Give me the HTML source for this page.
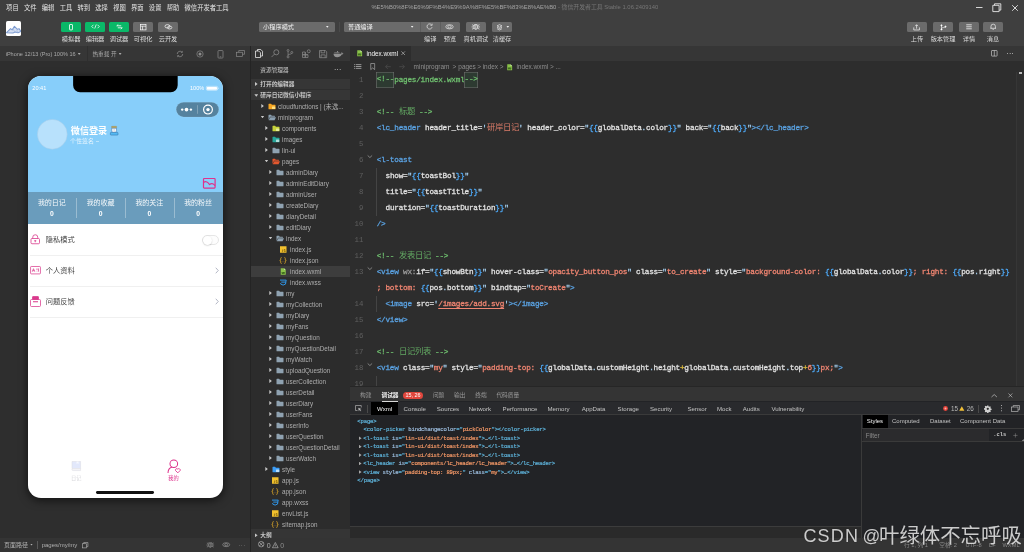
<!DOCTYPE html>
<html lang="zh-CN">
<head>
<meta charset="utf-8">
<title>微信开发者工具</title>
<style>
*{box-sizing:border-box;margin:0;padding:0}
html,body{width:1024px;height:552px;overflow:hidden;background:#2e2e2e}
body{position:relative;font-family:"Liberation Sans","Noto Sans CJK SC",sans-serif;color:#ccc;font-size:6.5px;line-height:1;-webkit-font-smoothing:antialiased}
#app{position:absolute;left:0;top:0;width:1024px;height:552px;overflow:hidden;will-change:transform}
.abs{position:absolute}
svg{display:block;overflow:visible}
/* ---------- top ---------- */
#top{position:absolute;left:0;top:0;width:1024px;height:46px;background:#3f3f3f}
#menu{position:absolute;left:6.100px;top:3.200px;height:9px;white-space:nowrap;font-size:6.300px;line-height:9px;color:#e6e6e6}
#menu span{display:inline-block;margin-right:5.250px}
#title{position:absolute;left:371.400px;top:3.300px;font-size:5.870px;line-height:9px;color:#a4a4a4;white-space:nowrap}
#title span{color:#767676}
.tbtn{position:absolute;top:21.600px;height:10.800px;width:20px;border-radius:1.5px;background:#0ab868}
.tbtn.g{background:#6b6b6b}
.tlab{position:absolute;top:34.600px;width:40px;margin-left:-10px;text-align:center;font-size:6.2px;line-height:8px;color:#dcdcdc;white-space:nowrap}
.sel{position:absolute;top:21.5px;height:10.5px;background:#6b6b6b;border-radius:1.5px;color:#f0f0f0;font-size:6.2px;line-height:10.5px;padding-left:4px;white-space:nowrap}
.dd{position:absolute;top:4.300px;width:3px;height:2px;background:#f0f0f0;clip-path:polygon(0 0,100% 0,50% 100%)}
.tri{display:inline-block;width:3px;height:2px;margin-left:2px;vertical-align:1px;background:currentColor;clip-path:polygon(0 0,100% 0,50% 100%)}
/* ---------- simulator ---------- */
#sim{position:absolute;left:0;top:46px;width:250px;height:506px;background:#2e2e2e;overflow:hidden}
#simbar{position:absolute;left:0;top:0;width:250px;height:15px;background:#363636}
#phone{position:absolute;left:27.500px;top:29.700px;width:195px;height:422px;background:#fff;border-radius:13px;overflow:hidden;box-shadow:0 2px 9px 1px rgba(0,0,0,0.55)}
#phead{position:absolute;left:0;top:0;width:100%;height:116.300px;background:#87cefa}
#pstats{position:absolute;left:0;top:116.300px;width:100%;height:32.500px;background:#6a9cbc}
#pstats .st{position:absolute;top:6.400px;width:48.750px;text-align:center;font-size:7px;line-height:9px;color:#f4f8fb;white-space:nowrap}
#pstats .st b{display:block;font-size:6.800px;line-height:8px;margin-top:2.800px;color:#fff}
#pstats i{position:absolute;top:6.500px;width:0.500px;height:20px;background:rgba(255,255,255,0.32)}
.prow{position:absolute;left:0;width:100%;height:31px}
.prow::after{content:"";position:absolute;left:2.500px;right:0;top:30.700px;height:0.600px;background:#f0f0f0}
.prow span{position:absolute;left:18.200px;top:11.100px;font-size:7.250px;line-height:10px;color:#444;white-space:nowrap}
.prow .chev{left:187.600px;top:12px}
#simfoot{position:absolute;left:0;top:492px;width:250px;height:14px;background:#343434}
#vline{position:absolute;left:250px;top:46px;width:1px;height:506px;background:#242424}
/* ---------- sidebar ---------- */
#side{position:absolute;left:251px;top:46px;width:99px;height:492px;background:#2c2c2c;overflow:hidden}
#actbar{position:absolute;left:0;top:0;width:99px;height:15px;background:#363636}
.sh{position:absolute;left:0;width:99px;height:11px;background:#363636}
.sh span{position:absolute;left:9.300px;top:2px;font-size:5.700px;line-height:7px;font-weight:bold;color:#c6c6c6;white-space:nowrap}
.ar{position:absolute;top:3.600px;width:2.600px;height:3.800px;background:#c8c8c8;clip-path:polygon(0 0,100% 50%,0 100%)}
.ad{position:absolute;top:4.200px;width:3.800px;height:2.600px;background:#c8c8c8;clip-path:polygon(0 0,100% 0,50% 100%)}
#tree{position:absolute;left:0;top:54.500px;width:99px}
.tr{position:relative;height:11px;width:99px}
.tr.sel2{background:#3d3d3d}
.tr span{position:absolute;top:2px;font-size:6.300px;line-height:7px;color:#aeaeae;white-space:nowrap}
.tr .ic{position:absolute;top:2px;width:8px;height:7px}
/* ---------- editor ---------- */
#ed{position:absolute;left:350px;top:46px;width:674px;height:340px;background:#2d2d2d;overflow:hidden}
#tabs{position:absolute;left:0;top:0;width:674px;height:15.300px;background:#363636}
#crumb{position:absolute;left:0;top:15.300px;width:674px;height:10.700px}
.cr{position:absolute;top:2px;font-size:6.450px;line-height:8px;color:#8e8e8e;white-space:nowrap}
.cl{position:absolute;left:0;width:674px;height:16px}
.cl pre{position:absolute;left:26.700px;top:0;font-family:"Liberation Mono",monospace;font-size:7.700px;letter-spacing:-0.221px;line-height:16px;color:#dcdcdc;white-space:pre}
.cl .ln{position:absolute;left:0;top:0;width:13.400px;text-align:right;font-style:normal;font-family:"Liberation Mono",monospace;font-size:7.330px;line-height:16px;color:#5f5f5f}
.cl .fd{position:absolute;left:17.100px;top:3.100px;width:5.800px;height:3.200px}
.c{color:#6fbf6f}.t{color:#5aa2e2}.a{color:#e2e2e2}.s{color:#f28672}.q{color:#a6d0f0}.b{color:#4da6f2}.d{color:#9c9c9c}.y{color:#e6c23c}
.u{text-decoration:underline;text-decoration-thickness:0.600px;text-underline-offset:2px}
.bx{display:inline-block;height:15.600px;line-height:15.600px;vertical-align:top;margin-top:0.200px;margin-left:-0.600px;padding-left:0.600px;box-shadow:inset 0 0 0 0.600px #707070;background:#2d3a31}
.k{font-size:8.300px;letter-spacing:0;-webkit-text-stroke:0}
.s .k{color:#dc7c69}.c .k{color:#62a862}
.cl pre{-webkit-text-stroke:0.280px currentColor}
/* ---------- debug ---------- */
#dbg{position:absolute;left:350px;top:386px;width:674px;height:152px;background:#222326;overflow:hidden}
#phd{position:absolute;left:0;top:0.300px;width:674px;height:15.200px;background:#343434;border-top:0.600px solid #262626}
.pt{position:absolute;top:4.300px;font-size:5.700px;line-height:7px;color:#9a9a9a;white-space:nowrap}
.pt.on{color:#f0f0f0;font-weight:bold}
#dtabs{position:absolute;left:0;top:15.500px;width:674px;height:13.700px;background:#292a2d;border-bottom:0.500px solid #3a3a3a}
.dt{position:absolute;top:3.600px;font-size:6.100px;line-height:7px;color:#c2c2c2;white-space:nowrap}
.dt.on{color:#f4f4f4}
.wl{position:absolute;left:0;width:511px;height:8.450px}
.wl pre{position:absolute;top:0;font-family:"Liberation Mono",monospace;font-size:5.600px;letter-spacing:-0.162px;line-height:8.450px;white-space:pre;color:#c8c8c8;-webkit-text-stroke:0.200px currentColor}
.wr{top:1.700px;width:2.600px;height:3.600px;background:#a8a8a8}
.wt{color:#5db0d7}.wa{color:#9bbbdc}.wv{color:#f29766}.wd{color:#d0d0d0}
#sty{position:absolute;left:511.400px;top:29.200px;width:162.600px;height:122.800px;background:#222326;border-left:0.600px solid #3a3a3a}
.sb{position:absolute;top:4px;font-size:5.700px;line-height:7px;color:#8a8a8a;white-space:nowrap}
#wm{position:absolute;left:803.400px;top:522px;height:26px;line-height:26px;white-space:nowrap;color:rgba(255,255,255,0.78);font-family:"Liberation Sans","Noto Sans CJK SC",sans-serif;text-shadow:0 0 1px rgba(0,0,0,0.5)}
#wm span{vertical-align:baseline}
#status{position:absolute;left:251px;top:538px;width:773px;height:14px;background:#343434}
</style>
</head>
<body>
<div id="app">
<!-- ================= TOP ================= -->
<div id="top">
  <div id="menu"><span>项目</span><span>文件</span><span>编辑</span><span>工具</span><span>转到</span><span>选择</span><span>视图</span><span>界面</span><span>设置</span><span>帮助</span><span>微信开发者工具</span></div>
  <div id="title">%E5%B0%8F%E6%9F%B4%E9%9A%8F%E5%BF%83%E8%AE%B0<span> - 微信开发者工具 Stable 1.06.2409140</span></div>
  <!-- window controls -->
  <svg class="abs" style="left:970px;top:0" width="54" height="15" viewBox="0 0 54 15" fill="none" stroke="#e8e8e8" stroke-width="0.9">
    <path d="M6 7.5h6.5"/>
    <path d="M22.8 5.3h6.3v6.3h-6.3z"/><path d="M24.5 5.3v-1.5h6.3v6.3h-1.7"/>
    <path d="M42.2 5.2l5.6 5.6M47.8 5.2l-5.6 5.6"/>
  </svg>
  <!-- logo -->
  <div class="abs" style="left:6px;top:21px;width:15.300px;height:15.300px;background:#fff;border-radius:1.600px;overflow:hidden">
    <svg width="15.300" height="15.300" viewBox="0 0 30 30" fill="none" stroke="#7d9bd0" stroke-width="2" stroke-linejoin="round"><path d="M1 23l8-8 3 2.500 4.500-7 6 6 3-1.500 4 5.500-6 2.500-5-1.500-5 2z" fill="#d5dff2"/><path d="M13 14l5 9M21 17l2 6" stroke-width="1.300" stroke="#9db4dc"/></svg>
  </div>
  <!-- green / gray buttons -->
  <div class="tbtn" style="left:61.1px"><svg class="abs" style="left:7px;top:2.2px" width="6" height="6.4" viewBox="0 0 12 13" fill="none" stroke="#fff" stroke-width="1.7"><rect x="3" y="1" width="6" height="11" rx="1"/></svg></div>
  <div class="tbtn" style="left:85px"><svg class="abs" style="left:5.5px;top:2.8px" width="9" height="5" viewBox="0 0 18 10" fill="none" stroke="#fff" stroke-width="1.5"><path d="M5 1.5L1.5 5 5 8.5M13 1.5L16.500 5 13 8.500M10.500 1L7.500 9"/></svg></div>
  <div class="tbtn" style="left:109px"><svg class="abs" style="left:6.5px;top:2.6px" width="7" height="5.6" viewBox="0 0 14 11" fill="none" stroke="#fff" stroke-width="1.6"><path d="M4.500 1L1.500 3.500h9M9.500 10l3-2.500h-9"/></svg></div>
  <div class="tbtn g" style="left:133.1px"><svg class="abs" style="left:6.7px;top:2.2px" width="6.6" height="6.4" viewBox="0 0 13 13" fill="none" stroke="#fff" stroke-width="1.4"><rect x="1" y="1" width="11" height="11"/><path d="M1 4.500h11M5 4.500V12"/></svg></div>
  <div class="tbtn g" style="left:158px"><svg class="abs" style="left:5.6px;top:2.6px" width="8.8" height="5.6" viewBox="0 0 18 11" fill="none" stroke="#fff" stroke-width="1.4"><ellipse cx="7" cy="4.500" rx="5" ry="3.500"/><ellipse cx="11.500" cy="7" rx="4.500" ry="3"/></svg></div>
  <div class="tlab" style="left:61.1px">模拟器</div>
  <div class="tlab" style="left:85px">编辑器</div>
  <div class="tlab" style="left:109px">调试器</div>
  <div class="tlab" style="left:133.1px">可视化</div>
  <div class="tlab" style="left:158px">云开发</div>
  <!-- selects -->
  <div class="sel" style="left:259.1px;width:75.9px">小程序模式<i class="dd" style="left:66.7px"></i></div>
  <div class="abs" style="left:339.2px;top:21.5px;width:0.6px;height:10.6px;background:#4a4a4a"></div>
  <div class="sel" style="left:344px;width:116px">普通编译<i class="dd" style="left:66.6px"></i>
    <div class="abs" style="left:76.4px;top:0;width:0.5px;height:10.6px;background:#5e5e5e"></div>
    <div class="abs" style="left:96.1px;top:0;width:0.5px;height:10.6px;background:#5e5e5e"></div>
    <svg class="abs" style="left:82.4px;top:1.8px" width="7.2" height="7.2" viewBox="0 0 14 14" fill="none" stroke="#f0f0f0" stroke-width="1.3"><path d="M11.800 8.200A5 5 0 1 1 10.600 3.300"/><path d="M11.900 1.200v3.300h-3.300" fill="none"/></svg>
    <svg class="abs" style="left:101.400px;top:2.6px" width="9" height="5.6" viewBox="0 0 18 11" fill="none" stroke="#f0f0f0" stroke-width="1.3"><ellipse cx="9" cy="5.500" rx="7.500" ry="4.200"/><ellipse cx="9" cy="5.500" rx="3.600" ry="2.400"/></svg>
  </div>
  <div class="tbtn g" style="left:465.9px;top:21.5px;height:10.6px"><svg class="abs" style="left:5.2px;top:1.7px" width="9.600" height="7.400" viewBox="0 0 19 15" fill="none" stroke="#fff" stroke-width="1.3"><ellipse cx="9.500" cy="8" rx="3.600" ry="5"/><path d="M9.500 3v10M6 1.800l1.600 1.800M13 1.800l-1.600 1.800M1 8h4.800M13.200 8H18M2 3.500l4 2M17 3.500l-4 2M2 12.500l4-2M17 12.500l-4-2"/></svg></div>
  <div class="tbtn g" style="left:492px;top:21.5px;height:10.6px"><svg class="abs" style="left:3.600px;top:2px" width="7" height="6.600" viewBox="0 0 14 13" fill="none" stroke="#fff" stroke-width="1.2"><path d="M7 1.200l5 2.500-5 2.500-5-2.500z"/><path d="M2 6.500l5 2.500 5-2.500M2 9.300l5 2.500 5-2.500"/></svg><i class="dd" style="left:14.300px"></i></div>
  <div class="tlab" style="left:420.300px">编译</div>
  <div class="tlab" style="left:440px">预览</div>
  <div class="tlab" style="left:465.900px">真机调试</div>
  <div class="tlab" style="left:492px">清缓存</div>
  <!-- right buttons -->
  <div class="tbtn g" style="left:907px;top:21.6px;height:10.7px"><svg class="abs" style="left:6.400px;top:2px" width="7.200" height="6.800" viewBox="0 0 14 13" fill="none" stroke="#fff" stroke-width="1.3"><path d="M1.500 6.500v5h11v-5M7 9V1.500M4.300 4L7 1.300 9.700 4"/></svg></div>
  <div class="tbtn g" style="left:933px;top:21.6px;height:10.700px"><svg class="abs" style="left:6.600px;top:2px" width="7" height="6.800" viewBox="0 0 14 13" fill="#fff" stroke="#fff" stroke-width="1.200"><circle cx="3" cy="2.500" r="1.300"/><circle cx="3" cy="10.500" r="1.300"/><circle cx="11" cy="5" r="1.300"/><path d="M3 2.500v8M3 8.500c0-2 8-1.500 8-3.500" fill="none"/></svg></div>
  <div class="tbtn g" style="left:959px;top:21.600px;height:10.700px"><svg class="abs" style="left:7px;top:2.600px" width="6" height="5.600" viewBox="0 0 12 11" fill="none" stroke="#fff" stroke-width="1.500"><path d="M0.500 1.500h11M0.500 5.500h11M0.500 9.500h11"/></svg></div>
  <div class="tbtn g" style="left:982.900px;top:21.600px;height:10.700px"><svg class="abs" style="left:6.800px;top:1.800px" width="6.400" height="7.200" viewBox="0 0 13 14" fill="none" stroke="#fff" stroke-width="1.300"><path d="M2 10.500V6.500a4.500 4.500 0 0 1 9 0v4M0.800 10.500h11.400M5.300 12.800h2.400"/></svg></div>
  <div class="tlab" style="left:907px">上传</div>
  <div class="tlab" style="left:933px">版本管理</div>
  <div class="tlab" style="left:959px">详情</div>
  <div class="tlab" style="left:982.900px">消息</div>
</div>
<!-- ================= SIMULATOR ================= -->
<div id="sim">
  <div id="simbar">
    <div class="abs" style="left:5.700px;top:4.900px;font-size:5.560px;line-height:7px;color:#a9a9a9;white-space:nowrap">iPhone 12/13 (Pro) 100% 16<i class="tri"></i></div>
    <div class="abs" style="left:87px;top:0;width:0.600px;height:15px;background:#2f2f2f"></div>
    <div class="abs" style="left:92.400px;top:4.900px;font-size:5.650px;line-height:7px;color:#a9a9a9;white-space:nowrap">热重载 开<i class="tri"></i></div>
    <svg class="abs" style="left:175.900px;top:3.800px" width="8" height="8" viewBox="0 0 16 16" fill="none" stroke="#8e8e8e" stroke-width="1.500"><path d="M13.500 8a5.500 5.500 0 0 1-9.800 3.400M2.500 8a5.500 5.500 0 0 1 9.800-3.400"/><path d="M12.800 1.800v3h-3M3.200 14.200v-3h3" stroke-width="1.200"/></svg>
    <svg class="abs" style="left:196px;top:3.800px" width="8" height="8" viewBox="0 0 16 16" fill="none" stroke="#8e8e8e" stroke-width="1.300"><circle cx="8" cy="8" r="6.300"/><circle cx="8" cy="8" r="3" fill="#8e8e8e" stroke="none"/></svg>
    <svg class="abs" style="left:216.500px;top:3.500px" width="7" height="8.600" viewBox="0 0 14 17" fill="none" stroke="#8e8e8e" stroke-width="1.400"><rect x="2" y="1" width="10" height="15" rx="1.500"/><path d="M5.500 13.500h3"/></svg>
    <svg class="abs" style="left:235.500px;top:4.300px" width="9" height="7" viewBox="0 0 18 14" fill="none" stroke="#8e8e8e" stroke-width="1.300"><path d="M5.500 4.500V1h11.500v7.500H13"/><rect x="1" y="4.500" width="12" height="8.500"/></svg>
  </div>
  <!-- phone -->
  <div id="phone">
    <div id="phead">
      <svg class="abs" style="left:45px;top:0" width="105" height="16.300" viewBox="0 0 105 16.300"><path d="M0.100 0h104.600v9.300a7 7 0 0 1-7 7H7.100a7 7 0 0 1-7-7z" fill="#000"/></svg>
      <div class="abs" style="left:4.800px;top:8.900px;font-size:5.600px;line-height:7px;color:#fff">20:41</div>
      <div class="abs" style="left:162.500px;top:9.600px;font-size:5.600px;line-height:7px;color:#fff">100%</div>
      <svg class="abs" style="left:178.500px;top:10.500px" width="13" height="4.600" viewBox="0 0 13 4.600"><rect x="0.300" y="0.300" width="11.300" height="4" rx="1.100" fill="none" stroke="#fff" stroke-width="0.500"/><rect x="0.900" y="0.900" width="10.100" height="2.800" rx="0.600" fill="#fff"/><path d="M12 1.500c0.700 0.200 0.700 1.400 0 1.600z" fill="#fff"/></svg>
      <!-- capsule -->
      <svg class="abs" style="left:148.700px;top:26.300px" width="43" height="15.200" viewBox="0 0 43 15.200"><rect x="0.200" y="0.200" width="42.600" height="14.800" rx="7.400" fill="rgba(0,0,0,0.37)" stroke="rgba(255,255,255,0.22)" stroke-width="0.400"/><circle cx="6.200" cy="7.600" r="1.200" fill="#fff"/><circle cx="10.500" cy="7.600" r="1.850" fill="#fff"/><circle cx="14.900" cy="7.600" r="1.200" fill="#fff"/><path d="M21.500 3.200v8.600" stroke="rgba(255,255,255,0.5)" stroke-width="0.500"/><circle cx="32" cy="7.600" r="4.400" fill="none" stroke="#fff" stroke-width="1.200"/><circle cx="32" cy="7.600" r="1.700" fill="#fff"/></svg>
      <!-- avatar -->
      <svg class="abs" style="left:9px;top:43.500px" width="31" height="31" viewBox="0 0 31 31"><circle cx="15.300" cy="15.300" r="14.900" fill="#b8e1fc" stroke="#a6cde8" stroke-width="0.500"/></svg>
      <div class="abs" style="left:43.300px;top:50.300px;font-size:9.100px;line-height:11px;font-weight:bold;color:#fff;white-space:nowrap">微信登录</div>
      <svg class="abs" style="left:82.200px;top:49.900px" width="8.400" height="9.400" viewBox="0 0 8.400 9.400"><path d="M1.700 2.200h4.800v2.300c0 1.300-1 2.300-2.400 2.300S1.700 5.800 1.700 4.500z" fill="#f4f6f8" stroke="#2f6aa5" stroke-width="0.500"/><rect x="1.500" y="0.300" width="5.200" height="1.400" rx="0.400" fill="#c9a44e" stroke="#7f7a55" stroke-width="0.300"/><path d="M3.400 3.600h1.600M4.200 4.300v1.600" stroke="#b9c0c8" stroke-width="0.500"/><rect x="0.400" y="6.400" width="7.600" height="2.700" rx="0.600" fill="#55baf3" stroke="#2b6ca3" stroke-width="0.500"/></svg>
      <div class="abs" style="left:42.600px;top:62.500px;font-size:6px;line-height:7px;color:rgba(255,255,255,0.8);white-space:nowrap">个性签名 ~</div>
      <!-- image icon -->
      <svg class="abs" style="left:175px;top:102.400px" width="12.600" height="10.600" viewBox="0 0 25 21" fill="none" stroke="#e0318c" stroke-width="2.400" stroke-linejoin="round"><rect x="1" y="1" width="23" height="19" rx="1.500"/><path d="M1 9c5-4 9 0 12 4 3-3 7-3 11 2"/></svg>
    </div>
    <div id="pstats">
      <div class="st" style="left:0">我的日记<b>0</b></div>
      <div class="st" style="left:48.750px">我的收藏<b>0</b></div>
      <div class="st" style="left:97.500px">我的关注<b>0</b></div>
      <div class="st" style="left:146.250px">我的粉丝<b>0</b></div>
      <i style="left:48.700px"></i><i style="left:97.500px"></i><i style="left:146.300px"></i>
    </div>
    <div class="prow" style="top:148.600px">
      <svg class="abs" style="left:2.600px;top:9.800px" width="10.500" height="10.500" viewBox="0 0 21 21" fill="none" stroke="#d93a8c" stroke-width="1.600"><path d="M5.500 9V6.500a5 5 0 0 1 10 0V9"/><rect x="2" y="9" width="17" height="10.500" rx="2"/><path d="M10.500 12.500v4M8.500 13.500h4"/></svg>
      <span>隐私模式</span>
      <div class="abs" style="left:174.800px;top:10.800px;width:16.600px;height:10.300px;border-radius:5.200px;background:#fdfdfd;border:0.500px solid #e6e6e6"><div class="abs" style="left:0.200px;top:0.200px;width:9px;height:9px;border-radius:50%;background:#fff;box-shadow:0 0.500px 1.500px rgba(0,0,0,0.22)"></div></div>
    </div>
    <div class="prow" style="top:179.600px">
      <svg class="abs" style="left:2.400px;top:11.200px" width="11" height="8.400" viewBox="0 0 22 17" fill="none" stroke="#d93a8c" stroke-width="1.500"><rect x="1" y="1" width="20" height="15" rx="1.500"/><path d="M4.500 11.500l2.500-6 2.500 6M5.300 9.500h3.400M14 5v3.500M17 5v6.500M14 11v0.800"/></svg>
      <span>个人资料</span>
      <svg class="abs chev" width="4" height="7" viewBox="0 0 8 14" fill="none" stroke="#9a9fb2" stroke-width="1.500"><path d="M1.500 1.500L6.500 7l-5 5.500"/></svg>
    </div>
    <div class="prow" style="top:210.600px">
      <svg class="abs" style="left:2.400px;top:9.600px" width="11" height="11" viewBox="0 0 22 22" fill="none" stroke="#d93a8c" stroke-width="1.500"><rect x="5" y="1" width="12" height="6" rx="1" fill="#d93a8c"/><rect x="1" y="7" width="20" height="14" rx="2"/><path d="M6 11.500h10" stroke-width="2"/></svg>
      <span>问题反馈</span>
      <svg class="abs chev" width="4" height="7" viewBox="0 0 8 14" fill="none" stroke="#9a9fb2" stroke-width="1.500"><path d="M1.500 1.500L6.500 7l-5 5.500"/></svg>
    </div>
    <!-- tab bar -->
    <svg class="abs" style="left:43.600px;top:384.800px" width="10.600" height="11.600" viewBox="0 0 21 23" fill="none"><path d="M2 3h17v14H2z" fill="#e2e8fb" stroke="#dcdce2" stroke-width="1"/><path d="M2 17h17v4H4a2 2 0 0 1 0-4" stroke="#e3e3e8" stroke-width="1.400" fill="#f4f4f7"/><path d="M11 3h4v5l-2-1.500L11 8z" fill="#f6f8fd"/></svg>
    <div class="abs" style="left:38.800px;top:399.400px;width:20px;text-align:center;font-size:5.200px;line-height:7px;color:#d8d8dc">日记</div>
    <svg class="abs" style="left:139.300px;top:383.100px" width="13.600" height="14.600" viewBox="0 0 27 29" fill="none" stroke="#dd2f8a" stroke-width="2"><circle cx="13.500" cy="9.500" r="7.600"/><path d="M2 28c0-6 3.200-10.500 8-12"/><path d="M21.500 27.500l-4.600-4.600a2.700 2.700 0 0 1 4.600-2.700 2.700 2.700 0 0 1 4.600 2.700z" stroke-width="1.700"/></svg>
    <div class="abs" style="left:135.900px;top:399.700px;width:20px;text-align:center;font-size:5.200px;line-height:7px;color:#dd2f8a">我的</div>
    <div class="abs" style="left:68.300px;top:415.400px;width:58.400px;height:2.700px;border-radius:1.400px;background:#111"></div>
  </div>
  <div id="simfoot">
    <div class="abs" style="left:4px;top:3.600px;font-size:6px;line-height:7px;color:#b0b0b0;white-space:nowrap">页面路径<i class="tri"></i></div>
    <div class="abs" style="left:37px;top:3px;width:0.500px;height:8px;background:#5a5a5a"></div>
    <div class="abs" style="left:41.700px;top:3.600px;font-size:6px;line-height:7px;color:#b0b0b0;white-space:nowrap">pages/my/my</div>
    <svg class="abs" style="left:81.700px;top:4px" width="6.400" height="6.400" viewBox="0 0 13 13" fill="none" stroke="#b0b0b0" stroke-width="1.300"><path d="M3.500 3.500V1h8.500v8.500H9.500"/><rect x="1" y="3.500" width="8.500" height="8.500"/></svg>
    <svg class="abs" style="left:205.500px;top:3.200px" width="8.600" height="7.600" viewBox="0 0 19 15" fill="none" stroke="#a0a0a0" stroke-width="1.300"><ellipse cx="9.500" cy="8" rx="3.600" ry="5"/><path d="M9.500 3v10M6 1.800l1.600 1.800M13 1.800l-1.600 1.800M1 8h4.800M13.200 8H18M2 3.500l4 2M17 3.500l-4 2M2 12.500l4-2M17 12.500l-4-2"/></svg>
    <svg class="abs" style="left:221.800px;top:4.400px" width="8.400" height="5.400" viewBox="0 0 18 11" fill="none" stroke="#a0a0a0" stroke-width="1.300"><ellipse cx="9" cy="5.500" rx="7.500" ry="4.200"/><ellipse cx="9" cy="5.500" rx="3.200" ry="2.400"/></svg>
    <div class="abs" style="left:238.300px;top:4.400px;font-size:6px;line-height:7px;color:#a0a0a0;letter-spacing:0.500px">···</div>
  </div>
</div>
<div id="vline"></div>
<!-- ================= SIDEBAR ================= -->
<div id="side">
  <div id="actbar">
    <svg class="abs" style="left:3.500px;top:3.200px" width="8" height="9" viewBox="0 0 16 18" fill="none" stroke="#f2f2f2" stroke-width="1.500"><path d="M5 4V1h6.500L15 4.500V14h-4"/><path d="M1 4h6.500L11 7.500V17H1z"/></svg>
    <svg class="abs" style="left:20px;top:3.300px" width="8.600" height="8.600" viewBox="0 0 17 17" fill="none" stroke="#929292" stroke-width="1.400"><circle cx="10.500" cy="6.500" r="5"/><path d="M7 10l-6 6"/></svg>
    <svg class="abs" style="left:35.400px;top:3px" width="7.600" height="9.400" viewBox="0 0 15 19" fill="none" stroke="#929292" stroke-width="1.300"><circle cx="4" cy="3" r="2"/><circle cx="4" cy="16" r="2"/><circle cx="11.500" cy="7" r="2"/><path d="M4 5v9M4 12.500c0-3 7.500-1 7.500-3.500"/></svg>
    <svg class="abs" style="left:50.800px;top:3px" width="9" height="9" viewBox="0 0 18 18" fill="none" stroke="#929292" stroke-width="1.300"><path d="M1 6h5.500v5.500H1zM1 11.500h5.500V17H1zM6.500 11.500H12V17H6.500zM6.500 6v5.500H12"/><circle cx="13.500" cy="4.500" r="3"/></svg>
    <svg class="abs" style="left:68px;top:3.500px" width="8.200" height="8.200" viewBox="0 0 16 16" fill="none" stroke="#929292" stroke-width="1.300"><path d="M1 1h11.500L15 3.500V15H1z"/><path d="M4 1v4.500h7V1M4 15V9.500h8V15"/></svg>
    <svg class="abs" style="left:81.500px;top:3.800px" width="10.400" height="7.600" viewBox="0 0 21 15" fill="#929292"><path d="M1 7.500h15.500c1-1 1-2.500 0.500-3.500 1.500 0.500 2 1.500 2 2.500 1 0 1.500 0 2 0.500-0.500 1.500-2 2-3.500 2-1.500 4-5 5.500-9 5.500-5 0-7.500-3-7.500-7z"/><path d="M3 4.500h2v2H3zM5.600 4.500h2v2h-2zM8.200 4.500h2v2h-2zM8.200 1.900h2v2h-2zM10.800 4.500h2v2h-2z"/></svg>
  </div>
  <div class="abs" style="left:9.300px;top:20.300px;font-size:5.700px;line-height:8px;color:#c8c8c8">资源管理器</div>
  <div class="abs" style="left:83px;top:19.700px;font-size:7px;line-height:8px;color:#c8c8c8;letter-spacing:0.200px">···</div>
  <div class="sh" style="top:32.500px"><i class="ar" style="left:4px"></i><span>打开的编辑器</span></div>
  <div class="sh" style="top:43.300px;height:11.200px;border-top:0.400px solid #2e2e2e"><i class="ad" style="left:3.400px;top:3.900px"></i><span style="top:1.700px">研岸日记微信小程序</span></div>
  <div id="tree">
    <div class="tr"><i class="ar" style="left:10.3px"></i><svg class="ic" style="left:17.0px" viewBox="0 0 16 14"><path d="M1 2.500a1 1 0 0 1 1-1h4.200l1.600 1.800H14a1 1 0 0 1 1 1v7.200a1 1 0 0 1-1 1H2a1 1 0 0 1-1-1z" fill="#f6a623"/><rect x="8" y="7" width="6.500" height="5" rx="1" fill="#ffe082"/></svg><span style="left:27.1px">cloudfunctions | (未选...</span></div>
    <div class="tr"><i class="ad" style="left:9.6px"></i><svg class="ic" style="left:17.0px" viewBox="0 0 16 14"><path d="M1 2.500a1 1 0 0 1 1-1h4l1.500 1.800H13a1 1 0 0 1 1 1V5.500H4.200L1 12z" fill="#8a9fb0"/><path d="M4.600 6.300H16L13.200 12.500H1.400z" fill="#8a9fb0"/></svg><span style="left:27.1px">miniprogram</span></div>
    <div class="tr"><i class="ar" style="left:14.3px"></i><svg class="ic" style="left:21.0px" viewBox="0 0 16 14"><path d="M1 2.500a1 1 0 0 1 1-1h4.200l1.600 1.800H14a1 1 0 0 1 1 1v7.200a1 1 0 0 1-1 1H2a1 1 0 0 1-1-1z" fill="#c6d23a"/><rect x="8" y="7" width="6.500" height="5" rx="1" fill="#e6ee9c"/></svg><span style="left:31.1px">components</span></div>
    <div class="tr"><i class="ar" style="left:14.3px"></i><svg class="ic" style="left:21.0px" viewBox="0 0 16 14"><path d="M1 2.500a1 1 0 0 1 1-1h4.200l1.600 1.800H14a1 1 0 0 1 1 1v7.200a1 1 0 0 1-1 1H2a1 1 0 0 1-1-1z" fill="#26a69a"/><rect x="8" y="7" width="6.500" height="5" rx="1" fill="#b2dfdb"/></svg><span style="left:31.1px">images</span></div>
    <div class="tr"><i class="ar" style="left:14.3px"></i><svg class="ic" style="left:21.0px" viewBox="0 0 16 14"><path d="M1 2.500a1 1 0 0 1 1-1h4.200l1.600 1.800H14a1 1 0 0 1 1 1v7.200a1 1 0 0 1-1 1H2a1 1 0 0 1-1-1z" fill="#8fa2b1"/></svg><span style="left:31.1px">lin-ui</span></div>
    <div class="tr"><i class="ad" style="left:13.6px"></i><svg class="ic" style="left:21.0px" viewBox="0 0 16 14"><path d="M1 2.500a1 1 0 0 1 1-1h4l1.500 1.800H13a1 1 0 0 1 1 1V5.500H4.200L1 12z" fill="#e4572e"/><path d="M4.600 6.300H16L13.200 12.500H1.400z" fill="#e4572e"/></svg><span style="left:31.1px">pages</span></div>
    <div class="tr"><i class="ar" style="left:18.3px"></i><svg class="ic" style="left:25.0px" viewBox="0 0 16 14"><path d="M1 2.500a1 1 0 0 1 1-1h4.200l1.600 1.800H14a1 1 0 0 1 1 1v7.200a1 1 0 0 1-1 1H2a1 1 0 0 1-1-1z" fill="#8fa2b1"/></svg><span style="left:35.1px">adminDiary</span></div>
    <div class="tr"><i class="ar" style="left:18.3px"></i><svg class="ic" style="left:25.0px" viewBox="0 0 16 14"><path d="M1 2.500a1 1 0 0 1 1-1h4.200l1.600 1.800H14a1 1 0 0 1 1 1v7.200a1 1 0 0 1-1 1H2a1 1 0 0 1-1-1z" fill="#8fa2b1"/></svg><span style="left:35.1px">adminEditDiary</span></div>
    <div class="tr"><i class="ar" style="left:18.3px"></i><svg class="ic" style="left:25.0px" viewBox="0 0 16 14"><path d="M1 2.500a1 1 0 0 1 1-1h4.200l1.600 1.800H14a1 1 0 0 1 1 1v7.200a1 1 0 0 1-1 1H2a1 1 0 0 1-1-1z" fill="#8fa2b1"/></svg><span style="left:35.1px">adminUser</span></div>
    <div class="tr"><i class="ar" style="left:18.3px"></i><svg class="ic" style="left:25.0px" viewBox="0 0 16 14"><path d="M1 2.500a1 1 0 0 1 1-1h4.200l1.600 1.800H14a1 1 0 0 1 1 1v7.200a1 1 0 0 1-1 1H2a1 1 0 0 1-1-1z" fill="#8fa2b1"/></svg><span style="left:35.1px">createDiary</span></div>
    <div class="tr"><i class="ar" style="left:18.3px"></i><svg class="ic" style="left:25.0px" viewBox="0 0 16 14"><path d="M1 2.500a1 1 0 0 1 1-1h4.200l1.600 1.800H14a1 1 0 0 1 1 1v7.200a1 1 0 0 1-1 1H2a1 1 0 0 1-1-1z" fill="#8fa2b1"/></svg><span style="left:35.1px">diaryDetail</span></div>
    <div class="tr"><i class="ar" style="left:18.3px"></i><svg class="ic" style="left:25.0px" viewBox="0 0 16 14"><path d="M1 2.500a1 1 0 0 1 1-1h4.200l1.600 1.800H14a1 1 0 0 1 1 1v7.200a1 1 0 0 1-1 1H2a1 1 0 0 1-1-1z" fill="#8fa2b1"/></svg><span style="left:35.1px">editDiary</span></div>
    <div class="tr"><i class="ad" style="left:17.6px"></i><svg class="ic" style="left:25.0px" viewBox="0 0 16 14"><path d="M1 2.500a1 1 0 0 1 1-1h4l1.500 1.800H13a1 1 0 0 1 1 1V5.500H4.200L1 12z" fill="#8fa2b1"/><path d="M4.600 6.300H16L13.200 12.500H1.400z" fill="#8fa2b1"/></svg><span style="left:35.1px">index</span></div>
    <div class="tr"><svg class="ic" style="left:28.4px" viewBox="0 0 16 14"><rect x="2" y="0.500" width="13" height="13" fill="#f2c12e"/><path d="M7.500 7v3.600c0 1-1.600 1-1.800 0.200M12.800 7.600c-0.600-0.900-2.600-0.700-2.400 0.500 0.200 1.200 2.600 0.600 2.500 2-0.100 1.200-2.300 1.200-2.800 0.100" stroke="#4a3800" stroke-width="1.200" fill="none"/></svg><span style="left:39.1px">index.js</span></div>
    <div class="tr"><svg class="ic" style="left:28.4px" viewBox="0 0 16 14" fill="none" stroke="#f0b429" stroke-width="1.500"><path d="M5 1C3 1 3.500 3 3.500 4.500S2.800 7 1.500 7c1.300 0 2 1 2 2.500S3 13 5 13M11 1c2 0 1.500 2 1.500 3.500s0.700 2.500 2 2.500c-1.300 0-2 1-2 2.500S13 13 11 13"/><path d="M6.500 9.500h0.600M9 9.500h0.600" stroke-width="1.300"/></svg><span style="left:39.1px">index.json</span></div>
    <div class="tr sel2"><svg class="ic" style="left:28.4px" viewBox="0 0 16 14"><path d="M3.500 0.500h6.500l3.500 3.500v9.500h-10z" fill="#8bc34a"/><path d="M10 0.500v3.500h3.500" fill="#c5e1a5"/><path d="M6 8v3h1.800V8M9 8v3h1.800V8" stroke="#27500f" stroke-width="1.300" fill="none"/></svg><span style="left:39.1px">index.wxml</span></div>
    <div class="tr"><svg class="ic" style="left:28.4px" viewBox="0 0 16 14" fill="none" stroke="#2f9bf0" stroke-width="1.900"><path d="M2 2.200H14.500M4.500 6.200H13.800M14.300 2.200L13 10.200 8.200 12.200 3.500 10.200 3.200 8.300"/></svg><span style="left:39.1px">index.wxss</span></div>
    <div class="tr"><i class="ar" style="left:18.3px"></i><svg class="ic" style="left:25.0px" viewBox="0 0 16 14"><path d="M1 2.500a1 1 0 0 1 1-1h4.200l1.600 1.800H14a1 1 0 0 1 1 1v7.200a1 1 0 0 1-1 1H2a1 1 0 0 1-1-1z" fill="#8fa2b1"/></svg><span style="left:35.1px">my</span></div>
    <div class="tr"><i class="ar" style="left:18.3px"></i><svg class="ic" style="left:25.0px" viewBox="0 0 16 14"><path d="M1 2.500a1 1 0 0 1 1-1h4.200l1.600 1.800H14a1 1 0 0 1 1 1v7.200a1 1 0 0 1-1 1H2a1 1 0 0 1-1-1z" fill="#8fa2b1"/></svg><span style="left:35.1px">myCollection</span></div>
    <div class="tr"><i class="ar" style="left:18.3px"></i><svg class="ic" style="left:25.0px" viewBox="0 0 16 14"><path d="M1 2.500a1 1 0 0 1 1-1h4.200l1.600 1.800H14a1 1 0 0 1 1 1v7.200a1 1 0 0 1-1 1H2a1 1 0 0 1-1-1z" fill="#8fa2b1"/></svg><span style="left:35.1px">myDiary</span></div>
    <div class="tr"><i class="ar" style="left:18.3px"></i><svg class="ic" style="left:25.0px" viewBox="0 0 16 14"><path d="M1 2.500a1 1 0 0 1 1-1h4.200l1.600 1.800H14a1 1 0 0 1 1 1v7.200a1 1 0 0 1-1 1H2a1 1 0 0 1-1-1z" fill="#8fa2b1"/></svg><span style="left:35.1px">myFans</span></div>
    <div class="tr"><i class="ar" style="left:18.3px"></i><svg class="ic" style="left:25.0px" viewBox="0 0 16 14"><path d="M1 2.500a1 1 0 0 1 1-1h4.200l1.600 1.800H14a1 1 0 0 1 1 1v7.200a1 1 0 0 1-1 1H2a1 1 0 0 1-1-1z" fill="#8fa2b1"/></svg><span style="left:35.1px">myQuestion</span></div>
    <div class="tr"><i class="ar" style="left:18.3px"></i><svg class="ic" style="left:25.0px" viewBox="0 0 16 14"><path d="M1 2.500a1 1 0 0 1 1-1h4.200l1.600 1.800H14a1 1 0 0 1 1 1v7.200a1 1 0 0 1-1 1H2a1 1 0 0 1-1-1z" fill="#8fa2b1"/></svg><span style="left:35.1px">myQuestionDetail</span></div>
    <div class="tr"><i class="ar" style="left:18.3px"></i><svg class="ic" style="left:25.0px" viewBox="0 0 16 14"><path d="M1 2.500a1 1 0 0 1 1-1h4.200l1.600 1.800H14a1 1 0 0 1 1 1v7.200a1 1 0 0 1-1 1H2a1 1 0 0 1-1-1z" fill="#8fa2b1"/></svg><span style="left:35.1px">myWatch</span></div>
    <div class="tr"><i class="ar" style="left:18.3px"></i><svg class="ic" style="left:25.0px" viewBox="0 0 16 14"><path d="M1 2.500a1 1 0 0 1 1-1h4.200l1.600 1.800H14a1 1 0 0 1 1 1v7.200a1 1 0 0 1-1 1H2a1 1 0 0 1-1-1z" fill="#8fa2b1"/></svg><span style="left:35.1px">uploadQuestion</span></div>
    <div class="tr"><i class="ar" style="left:18.3px"></i><svg class="ic" style="left:25.0px" viewBox="0 0 16 14"><path d="M1 2.500a1 1 0 0 1 1-1h4.200l1.600 1.800H14a1 1 0 0 1 1 1v7.200a1 1 0 0 1-1 1H2a1 1 0 0 1-1-1z" fill="#8fa2b1"/></svg><span style="left:35.1px">userCollection</span></div>
    <div class="tr"><i class="ar" style="left:18.3px"></i><svg class="ic" style="left:25.0px" viewBox="0 0 16 14"><path d="M1 2.500a1 1 0 0 1 1-1h4.200l1.600 1.800H14a1 1 0 0 1 1 1v7.200a1 1 0 0 1-1 1H2a1 1 0 0 1-1-1z" fill="#8fa2b1"/></svg><span style="left:35.1px">userDetail</span></div>
    <div class="tr"><i class="ar" style="left:18.3px"></i><svg class="ic" style="left:25.0px" viewBox="0 0 16 14"><path d="M1 2.500a1 1 0 0 1 1-1h4.200l1.600 1.800H14a1 1 0 0 1 1 1v7.200a1 1 0 0 1-1 1H2a1 1 0 0 1-1-1z" fill="#8fa2b1"/></svg><span style="left:35.1px">userDiary</span></div>
    <div class="tr"><i class="ar" style="left:18.3px"></i><svg class="ic" style="left:25.0px" viewBox="0 0 16 14"><path d="M1 2.500a1 1 0 0 1 1-1h4.200l1.600 1.800H14a1 1 0 0 1 1 1v7.200a1 1 0 0 1-1 1H2a1 1 0 0 1-1-1z" fill="#8fa2b1"/></svg><span style="left:35.1px">userFans</span></div>
    <div class="tr"><i class="ar" style="left:18.3px"></i><svg class="ic" style="left:25.0px" viewBox="0 0 16 14"><path d="M1 2.500a1 1 0 0 1 1-1h4.200l1.600 1.800H14a1 1 0 0 1 1 1v7.200a1 1 0 0 1-1 1H2a1 1 0 0 1-1-1z" fill="#8fa2b1"/></svg><span style="left:35.1px">userInfo</span></div>
    <div class="tr"><i class="ar" style="left:18.3px"></i><svg class="ic" style="left:25.0px" viewBox="0 0 16 14"><path d="M1 2.500a1 1 0 0 1 1-1h4.200l1.600 1.800H14a1 1 0 0 1 1 1v7.200a1 1 0 0 1-1 1H2a1 1 0 0 1-1-1z" fill="#8fa2b1"/></svg><span style="left:35.1px">userQuestion</span></div>
    <div class="tr"><i class="ar" style="left:18.3px"></i><svg class="ic" style="left:25.0px" viewBox="0 0 16 14"><path d="M1 2.500a1 1 0 0 1 1-1h4.200l1.600 1.800H14a1 1 0 0 1 1 1v7.200a1 1 0 0 1-1 1H2a1 1 0 0 1-1-1z" fill="#8fa2b1"/></svg><span style="left:35.1px">userQuestionDetail</span></div>
    <div class="tr"><i class="ar" style="left:18.3px"></i><svg class="ic" style="left:25.0px" viewBox="0 0 16 14"><path d="M1 2.500a1 1 0 0 1 1-1h4.200l1.600 1.800H14a1 1 0 0 1 1 1v7.200a1 1 0 0 1-1 1H2a1 1 0 0 1-1-1z" fill="#8fa2b1"/></svg><span style="left:35.1px">userWatch</span></div>
    <div class="tr"><i class="ar" style="left:14.3px"></i><svg class="ic" style="left:21.0px" viewBox="0 0 16 14"><path d="M1 2.500a1 1 0 0 1 1-1h4.200l1.600 1.800H14a1 1 0 0 1 1 1v7.200a1 1 0 0 1-1 1H2a1 1 0 0 1-1-1z" fill="#3b9cf5"/><rect x="8" y="7" width="6.500" height="5" rx="1" fill="#bbdefb"/></svg><span style="left:31.1px">style</span></div>
    <div class="tr"><svg class="ic" style="left:20.4px" viewBox="0 0 16 14"><rect x="2" y="0.500" width="13" height="13" fill="#f2c12e"/><path d="M7.500 7v3.600c0 1-1.600 1-1.800 0.200M12.800 7.600c-0.600-0.900-2.600-0.700-2.400 0.500 0.200 1.200 2.600 0.600 2.500 2-0.100 1.200-2.300 1.200-2.800 0.100" stroke="#4a3800" stroke-width="1.200" fill="none"/></svg><span style="left:31.1px">app.js</span></div>
    <div class="tr"><svg class="ic" style="left:20.4px" viewBox="0 0 16 14" fill="none" stroke="#f0b429" stroke-width="1.500"><path d="M5 1C3 1 3.500 3 3.500 4.500S2.800 7 1.500 7c1.300 0 2 1 2 2.500S3 13 5 13M11 1c2 0 1.500 2 1.500 3.500s0.700 2.500 2 2.500c-1.300 0-2 1-2 2.500S13 13 11 13"/><path d="M6.500 9.500h0.600M9 9.500h0.600" stroke-width="1.300"/></svg><span style="left:31.1px">app.json</span></div>
    <div class="tr"><svg class="ic" style="left:20.4px" viewBox="0 0 16 14" fill="none" stroke="#2f9bf0" stroke-width="1.900"><path d="M2 2.200H14.500M4.500 6.200H13.800M14.300 2.200L13 10.200 8.200 12.200 3.500 10.200 3.200 8.300"/></svg><span style="left:31.1px">app.wxss</span></div>
    <div class="tr"><svg class="ic" style="left:20.4px" viewBox="0 0 16 14"><rect x="2" y="0.500" width="13" height="13" fill="#f2c12e"/><path d="M7.500 7v3.600c0 1-1.600 1-1.800 0.200M12.800 7.600c-0.600-0.900-2.600-0.700-2.400 0.500 0.200 1.200 2.600 0.600 2.500 2-0.100 1.200-2.300 1.200-2.800 0.100" stroke="#4a3800" stroke-width="1.200" fill="none"/></svg><span style="left:31.1px">envList.js</span></div>
    <div class="tr"><svg class="ic" style="left:20.4px" viewBox="0 0 16 14" fill="none" stroke="#f0b429" stroke-width="1.500"><path d="M5 1C3 1 3.500 3 3.500 4.500S2.800 7 1.500 7c1.300 0 2 1 2 2.500S3 13 5 13M11 1c2 0 1.500 2 1.500 3.500s0.700 2.500 2 2.500c-1.300 0-2 1-2 2.500S13 13 11 13"/><path d="M6.500 9.500h0.600M9 9.500h0.600" stroke-width="1.300"/></svg><span style="left:31.1px">sitemap.json</span></div>
  </div>
  <div class="sh" style="top:483.300px;height:8.700px;background:#353535"><i class="ar" style="left:4px;top:4.100px"></i><span style="top:2.700px">大纲</span></div>
</div>
<!-- ================= EDITOR ================= -->
<div id="ed">
  <div id="tabs">
    <div class="abs" style="left:0;top:0;width:61.400px;height:15.300px;background:#2d2d2d"></div>
    <svg class="abs" style="left:6.8px;top:4.4px" width="5.400" height="6.400" viewBox="0 0 11 13"><path d="M0.500 0.500h6.500l3.500 3.500v8.500h-10z" fill="#8bc34a"/><path d="M7 0.500v3.500h3.500" fill="#c5e1a5"/><path d="M3 7v3.500h1.800V7M6 7v3.500h1.800V7" stroke="#27500f" stroke-width="1.300" fill="none"/></svg>
    <div class="abs" style="left:16.500px;top:3.800px;font-size:6.400px;line-height:8px;color:#f4f4f4;white-space:nowrap">index.wxml</div>
    <svg class="abs" style="left:51.400px;top:5.400px" width="4.400" height="4.400" viewBox="0 0 9 9" fill="none" stroke="#d8d8d8" stroke-width="1.100"><path d="M0.800 0.800l7.400 7.400M8.200 0.800L0.800 8.200"/></svg>
    <svg class="abs" style="left:641px;top:4.400px" width="6.600" height="6.600" viewBox="0 0 13 13" fill="none" stroke="#d0d0d0" stroke-width="1.300"><rect x="1" y="1" width="11" height="11" rx="1"/><path d="M6.500 1v11"/></svg>
    <div class="abs" style="left:656.500px;top:4.300px;font-size:7px;line-height:8px;color:#d0d0d0;letter-spacing:0.200px">···</div>
  </div>
  <div id="crumb">
    <svg class="abs" style="left:4.200px;top:3.200px" width="7.400" height="5" viewBox="0 0 15 10" fill="none" stroke="#b4b4b4" stroke-width="1.600"><path d="M3.500 1.200H15M3.500 5H15M3.500 8.800H15M0 1.200h1.800M0 5h1.800M0 8.800h1.800"/></svg>
    <svg class="abs" style="left:20.400px;top:2px" width="5.400" height="7.400" viewBox="0 0 11 15" fill="none" stroke="#a8a8a8" stroke-width="1.400"><path d="M1.500 1h8v12.500L5.500 10l-4 3.500z"/></svg>
    <svg class="abs" style="left:35px;top:3px" width="6" height="5.400" viewBox="0 0 12 11" fill="none" stroke="#555" stroke-width="1.300"><path d="M11.500 5.500h-10M5.500 1l-4.500 4.500 4.500 4.500"/></svg>
    <svg class="abs" style="left:49px;top:3px" width="6" height="5.400" viewBox="0 0 12 11" fill="none" stroke="#555" stroke-width="1.300"><path d="M0.500 5.500h10M6.500 1l4.500 4.500-4.500 4.500"/></svg>
    <div class="cr" style="left:63.600px">miniprogram</div><div class="cr" style="left:102.400px">&gt;</div>
    <div class="cr" style="left:108.300px">pages</div><div class="cr" style="left:127.200px">&gt;</div>
    <div class="cr" style="left:132.700px">index</div><div class="cr" style="left:149.700px">&gt;</div>
    <div class="cr" style="left:166.400px">index.wxml</div><div class="cr" style="left:200px">&gt;</div><div class="cr" style="left:205.500px">...</div>
    <svg class="abs" style="left:156.6px;top:2.6px" width="5.400" height="6.400" viewBox="0 0 11 13"><path d="M0.500 0.500h6.500l3.500 3.500v8.500h-10z" fill="#8bc34a"/><path d="M7 0.500v3.500h3.500" fill="#c5e1a5"/><path d="M3 7v3.500h1.800V7M6 7v3.500h1.800V7" stroke="#27500f" stroke-width="1.300" fill="none"/></svg>
  </div>
  <div class="abs" style="left:26.300px;top:122px;width:0.600px;height:48px;background:#444"></div>
  <div class="abs" style="left:26.300px;top:250px;width:0.600px;height:16px;background:#444"></div>
  <div class="abs" style="left:26.300px;top:330px;width:0.600px;height:10px;background:#444"></div>
  <div class="abs" style="left:666.300px;top:26px;width:7.700px;height:314px;background:#2f2f2f;border-left:0.500px solid #363636"></div>
  <div class="abs" style="left:668.800px;top:25.900px;width:2.800px;height:2.500px;background:#bdbdbd"></div>
  <div class="cl" style="top:26px"><i class="ln">1</i><pre><span class="c"><span class="bx">&lt;!--</span>pages/index.wxml<span class="bx">--&gt;</span></span></pre></div>
  <div class="cl" style="top:42px"><i class="ln">2</i><pre></pre></div>
  <div class="cl" style="top:58px"><i class="ln">3</i><pre><span class="c">&lt;!-- <span class="k">标题</span> --&gt;</span></pre></div>
  <div class="cl" style="top:74px"><i class="ln">4</i><pre><span class="t">&lt;lc_header</span> <span class="a">header_title=</span><span class="q">'</span><span class="s"><span class="k">研岸日记</span></span><span class="q">'</span> <span class="a">header_color=</span><span class="q">"</span><span class="b">{{</span><span class="a">globalData</span><span class="q">.</span><span class="a">color</span><span class="b">}}</span><span class="q">"</span> <span class="a">back=</span><span class="q">"</span><span class="b">{{</span><span class="a">back</span><span class="b">}}</span><span class="q">"</span><span class="t">&gt;&lt;/lc_header&gt;</span></pre></div>
  <div class="cl" style="top:90px"><i class="ln">5</i><pre></pre></div>
  <div class="cl" style="top:106px"><i class="ln">6</i><svg class="fd" viewBox="0 0 8 5" fill="none" stroke="#b4b4b4" stroke-width="1"><path d="M0.500 0.700l3.500 3.300 3.500-3.300"/></svg><pre><span class="t">&lt;l-toast</span></pre></div>
  <div class="cl" style="top:122px"><i class="ln">7</i><pre>  <span class="a">show=</span><span class="q">"</span><span class="b">{{</span><span class="a">toastBol</span><span class="b">}}</span><span class="q">"</span></pre></div>
  <div class="cl" style="top:138px"><i class="ln">8</i><pre>  <span class="a">title=</span><span class="q">"</span><span class="b">{{</span><span class="a">toastTitle</span><span class="b">}}</span><span class="q">"</span></pre></div>
  <div class="cl" style="top:154px"><i class="ln">9</i><pre>  <span class="a">duration=</span><span class="q">"</span><span class="b">{{</span><span class="a">toastDuration</span><span class="b">}}</span><span class="q">"</span></pre></div>
  <div class="cl" style="top:170px"><i class="ln">10</i><pre><span class="t">/&gt;</span></pre></div>
  <div class="cl" style="top:186px"><i class="ln">11</i><pre></pre></div>
  <div class="cl" style="top:202px"><i class="ln">12</i><pre><span class="c">&lt;!-- <span class="k">发表日记</span> --&gt;</span></pre></div>
  <div class="cl" style="top:218px"><i class="ln">13</i><svg class="fd" viewBox="0 0 8 5" fill="none" stroke="#b4b4b4" stroke-width="1"><path d="M0.500 0.700l3.500 3.300 3.500-3.300"/></svg><pre><span class="t">&lt;view</span> <span class="d">wx:</span><span class="a">if=</span><span class="q">"</span><span class="b">{{</span><span class="a">showBtn</span><span class="b">}}</span><span class="q">"</span> <span class="a">hover-class=</span><span class="q">"</span><span class="s">opacity_button_pos</span><span class="q">"</span> <span class="a">class=</span><span class="q">"</span><span class="s">to_create</span><span class="q">"</span> <span class="a">style=</span><span class="q">"</span><span class="s">background-color: </span><span class="b">{{</span><span class="a">globalData</span><span class="q">.</span><span class="a">color</span><span class="b">}}</span><span class="s">; right: </span><span class="b">{{</span><span class="a">pos</span><span class="q">.</span><span class="a">right</span><span class="b">}}</span></pre></div>
  <div class="cl" style="top:234px"><pre><span class="s">; bottom: </span><span class="b">{{</span><span class="a">pos</span><span class="q">.</span><span class="a">bottom</span><span class="b">}}</span><span class="q">"</span> <span class="a">bindtap=</span><span class="q">"</span><span class="s">toCreate</span><span class="q">"</span><span class="t">&gt;</span></pre></div>
  <div class="cl" style="top:250px"><i class="ln">14</i><pre>  <span class="t">&lt;image</span> <span class="a">src=</span><span class="q">'</span><span class="s u">/images/add.svg</span><span class="q">'</span><span class="t">&gt;&lt;/image&gt;</span></pre></div>
  <div class="cl" style="top:266px"><i class="ln">15</i><pre><span class="t">&lt;/view&gt;</span></pre></div>
  <div class="cl" style="top:282px"><i class="ln">16</i><pre></pre></div>
  <div class="cl" style="top:298px"><i class="ln">17</i><pre><span class="c">&lt;!-- <span class="k">日记列表</span> --&gt;</span></pre></div>
  <div class="cl" style="top:314px"><i class="ln">18</i><svg class="fd" viewBox="0 0 8 5" fill="none" stroke="#b4b4b4" stroke-width="1"><path d="M0.500 0.700l3.500 3.300 3.500-3.300"/></svg><pre><span class="t">&lt;view</span> <span class="a">class=</span><span class="q">"</span><span class="s">my</span><span class="q">"</span> <span class="a">style=</span><span class="q">"</span><span class="s">padding-top: </span><span class="b">{{</span><span class="a">globalData</span><span class="q">.</span><span class="a">customHeight</span><span class="q">.</span><span class="a">height</span><span class="y">+</span><span class="a">globalData</span><span class="q">.</span><span class="a">customHeight</span><span class="q">.</span><span class="a">top</span><span class="y">+</span><span class="s">6</span><span class="b">}}</span><span class="s">px;</span><span class="q">"</span><span class="t">&gt;</span></pre></div>
  <div class="cl" style="top:330px"><i class="ln">19</i><pre></pre></div>
</div>
<!-- ================= DEBUGGER ================= -->
<div id="dbg">
  <div id="phd"><div class="pt" style="left:10px">构建</div><div class="pt on" style="left:31.5px">调试器</div><div class="pt" style="left:82.9px">问题</div><div class="pt" style="left:104px">输出</div><div class="pt" style="left:125.3px">终端</div><div class="pt" style="left:146.4px">代码质量</div>
    <div class="abs" style="left:31.500px;top:13.400px;width:16.500px;height:0.800px;background:#d8d8d8"></div>
    <div class="abs" style="left:52.600px;top:4.300px;width:20.700px;height:7.600px;border-radius:3.800px;background:#e0463c;color:#fff;font-size:5.400px;line-height:7.600px;text-align:center;white-space:nowrap">15, 26</div>
    <svg class="abs" style="left:640.500px;top:6.800px" width="6.400" height="3.600" viewBox="0 0 13 7" fill="none" stroke="#d4d4d4" stroke-width="1.300"><path d="M1 6l5.500-5 5.500 5"/></svg>
    <svg class="abs" style="left:657.600px;top:6.200px" width="4.800" height="4.800" viewBox="0 0 10 10" fill="none" stroke="#d4d4d4" stroke-width="1.200"><path d="M1 1l8 8M9 1L1 9"/></svg>
  </div>
  <div id="dtabs">
    <svg class="abs" style="left:5.400px;top:3.400px" width="7" height="7" viewBox="0 0 14 14" fill="none" stroke="#b8b8b8" stroke-width="1.300"><path d="M12.500 5V1h-11.500v10H5"/><path d="M6.500 5.500l6.500 2.600-2.800 1 2.300 2.800-1 0.800-2.300-2.800-1.600 2.400z" fill="#b8b8b8" stroke="none"/></svg>
    <div class="abs" style="left:17.400px;top:3px;width:0.500px;height:8px;background:#4a4a4a"></div>
    <div class="abs" style="left:20.800px;top:0.400px;width:27.300px;height:13px;background:#000"></div>
    <div class="dt on" style="left:26.9px">Wxml</div><div class="dt" style="left:53.6px">Console</div><div class="dt" style="left:86.8px">Sources</div><div class="dt" style="left:118.7px">Network</div><div class="dt" style="left:152.6px">Performance</div><div class="dt" style="left:197.5px">Memory</div><div class="dt" style="left:231.7px">AppData</div><div class="dt" style="left:267.6px">Storage</div><div class="dt" style="left:300px">Security</div><div class="dt" style="left:337.4px">Sensor</div><div class="dt" style="left:367px">Mock</div><div class="dt" style="left:392.8px">Audits</div><div class="dt" style="left:421.4px">Vulnerability</div>
    <svg class="abs" style="left:593.200px;top:4.200px" width="5" height="5" viewBox="0 0 5 5"><circle cx="2.500" cy="2.500" r="2.400" fill="#e8453c"/><circle cx="2.500" cy="2.500" r="1" fill="#f6b0ab"/></svg>
    <div class="dt" style="left:601px;color:#b8b8b8;font-size:6.300px">15</div>
    <svg class="abs" style="left:609.400px;top:4.200px" width="5.600" height="5" viewBox="0 0 11 10"><path d="M5.500 0.500L10.700 9.500H0.300z" fill="#f2c037"/></svg>
    <div class="dt" style="left:616.800px;color:#b8b8b8;font-size:6.300px">26</div>
    <div class="abs" style="left:628.200px;top:3px;width:0.500px;height:8px;background:#4a4a4a"></div>
    <svg class="abs" style="left:633.700px;top:3.200px" width="7.600" height="7.600" viewBox="0 0 16 16" fill="#cfcfcf"><path d="M6.700 1h2.600l0.400 1.900 1.300 0.600 1.700-1 1.800 1.800-1 1.700 0.600 1.300 1.900 0.400v2.600l-1.900 0.400-0.600 1.300 1 1.700-1.800 1.800-1.700-1-1.300 0.600-0.400 1.900H6.700l-0.400-1.900-1.300-0.600-1.700 1-1.800-1.800 1-1.700-0.600-1.300L0 9.300V6.700l1.900-0.400 0.600-1.300-1-1.700 1.800-1.800 1.700 1 1.300-0.600z"/><circle cx="8" cy="8" r="2.400" fill="#2b2b2b"/></svg>
    <div class="abs" style="left:650.800px;top:3.600px;width:1.200px;height:1.200px;border-radius:50%;background:#cfcfcf;box-shadow:0 2.600px 0 #cfcfcf,0 5.200px 0 #cfcfcf"></div>
    <svg class="abs" style="left:660.800px;top:3.600px" width="9" height="7" viewBox="0 0 18 14" fill="none" stroke="#bdbdbd" stroke-width="1.300"><path d="M4.500 4V1h12.500v8.500h-3"/><rect x="1" y="4" width="13" height="9"/></svg>
  </div>
  <div class="wl" style="top:31.80px"><pre style="left:7.3px"><span class="wt">&lt;page&gt;</span></pre></div>
  <div class="wl" style="top:40.25px"><pre style="left:13.6px"><span class="wt">&lt;color-picker</span> <span class="wa">bindchangecolor</span><span class="wt">="</span><span class="wv">pickColor</span><span class="wt">"&gt;</span><span class="wt">&lt;/color-picker&gt;</span></pre></div>
  <div class="wl" style="top:48.70px"><i class="ar wr" style="left:9px"></i><pre style="left:13.3px"><span class="wt">&lt;l-toast</span> <span class="wa">is</span><span class="wt">="</span><span class="wv">lin-ui/dist/toast/index</span><span class="wt">"&gt;</span><span class="wd">…</span><span class="wt">&lt;/l-toast&gt;</span></pre></div>
  <div class="wl" style="top:57.15px"><i class="ar wr" style="left:9px"></i><pre style="left:13.3px"><span class="wt">&lt;l-toast</span> <span class="wa">is</span><span class="wt">="</span><span class="wv">lin-ui/dist/toast/index</span><span class="wt">"&gt;</span><span class="wd">…</span><span class="wt">&lt;/l-toast&gt;</span></pre></div>
  <div class="wl" style="top:65.60px"><i class="ar wr" style="left:9px"></i><pre style="left:13.3px"><span class="wt">&lt;l-toast</span> <span class="wa">is</span><span class="wt">="</span><span class="wv">lin-ui/dist/toast/index</span><span class="wt">"&gt;</span><span class="wd">…</span><span class="wt">&lt;/l-toast&gt;</span></pre></div>
  <div class="wl" style="top:74.05px"><i class="ar wr" style="left:9px"></i><pre style="left:13.3px"><span class="wt">&lt;lc_header</span> <span class="wa">is</span><span class="wt">="</span><span class="wv">components/lc_header/lc_header</span><span class="wt">"&gt;</span><span class="wd">…</span><span class="wt">&lt;/lc_header&gt;</span></pre></div>
  <div class="wl" style="top:82.50px"><i class="ar wr" style="left:9px"></i><pre style="left:13.3px"><span class="wt">&lt;view</span> <span class="wa">style</span><span class="wt">="</span><span class="wv">padding-top: 89px;</span><span class="wt">"</span> <span class="wa">class</span><span class="wt">="</span><span class="wv">my</span><span class="wt">"&gt;</span><span class="wd">…</span><span class="wt">&lt;/view&gt;</span></pre></div>
  <div class="wl" style="top:90.95px"><pre style="left:7.3px"><span class="wt">&lt;/page&gt;</span></pre></div>
  <div class="abs" style="left:0;top:139.800px;width:511.400px;height:12.200px;background:#2a2a2a;border-top:0.600px solid #3c3c3c"></div>
  <!-- styles pane -->
  <div id="sty">
    <div class="abs" style="left:1px;top:0;width:24.400px;height:12.700px;background:#000"></div>
    <div class="dt" style="left:4.400px;top:2.900px;color:#f2f2f2;font-size:6px">Styles</div>
    <div class="dt" style="left:29.600px;top:2.900px;font-size:6px">Computed</div>
    <div class="dt" style="left:67.600px;top:2.900px;font-size:6px">Dataset</div>
    <div class="dt" style="left:97.600px;top:2.900px;font-size:6px">Component Data</div>
    <div class="abs" style="left:0;top:12.700px;width:162.600px;height:14.600px;background:#222326;border-top:0.500px solid #3a3a3a;border-bottom:0.500px solid #3a3a3a"></div>
    <div class="abs" style="left:1px;top:14.200px;width:125.600px;height:11.600px;background:#2b2b2d"></div>
    <div class="dt" style="left:3.300px;top:16.800px;color:#8c8c8c;font-size:6.300px">Filter</div>
    <div class="abs" style="left:130.800px;top:16.800px;font-family:'Liberation Mono',monospace;font-weight:bold;font-size:5.400px;line-height:7px;color:#c8c8c8">.cls</div>
    <svg class="abs" style="left:150.600px;top:17.400px" width="4.800" height="4.800" viewBox="0 0 10 10" fill="none" stroke="#8a8a8a" stroke-width="1.100"><path d="M5 0.500v9M0.500 5h9"/></svg>
    <div class="abs" style="left:159px;top:23.800px;width:2.400px;height:2.400px;background:#9a9a9a;clip-path:polygon(100% 0,100% 100%,0 100%)"></div>
  </div>
</div>
<div id="status">
  <svg class="abs" style="left:7.200px;top:3.200px" width="6.400" height="6.400" viewBox="0 0 14 14" fill="none" stroke="#c4c4c4" stroke-width="1.300"><circle cx="7" cy="7" r="6"/><path d="M2.800 2.800l8.400 8.400M11.200 2.800l-8.400 8.400"/></svg>
  <div class="sb" style="left:15.700px;top:3.500px;font-size:7px;color:#adadad">0</div>
  <svg class="abs" style="left:21px;top:3.600px" width="6.600" height="6.200" viewBox="0 0 15 14" fill="none" stroke="#c4c4c4" stroke-width="1.300"><path d="M7.500 1L14 13H1z"/><path d="M7.500 5.500v4M7.500 10.600v1"/></svg>
  <div class="sb" style="left:29.200px;top:3.500px;font-size:7px;color:#8e8e8e">0</div>
  <div class="sb" style="left:653px">行 1, 列 1</div>
  <div class="sb" style="left:688.300px">空格: 2</div>
  <div class="sb" style="left:714.500px">UTF-8</div>
  <div class="sb" style="left:738px">LF</div>
  <div class="sb" style="left:751.500px">WXML</div>
</div>
<div id="wm"><span style="font-size:18px;letter-spacing:1.200px">CSDN</span><span style="font-size:17.500px;margin-left:3.400px">@</span><span style="font-size:20.400px;margin-left:-1.300px;position:relative;top:0.500px">叶绿体不忘呼吸</span></div>
</div>
</body>
</html>
